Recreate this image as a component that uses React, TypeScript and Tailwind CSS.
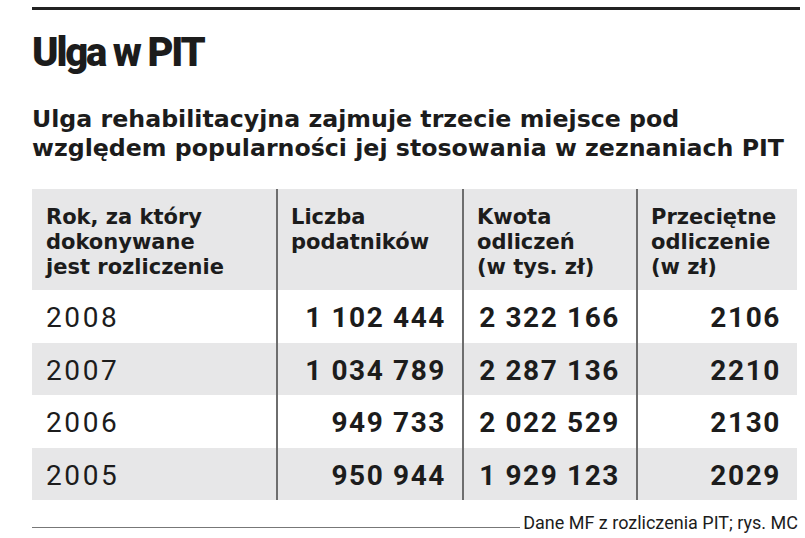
const rows = [
  { year: "2008", count: "1 102 444", sum: "2 322 166", avg: "2106", gray: false, h: "h-[53px]" },
  { year: "2007", count: "1 034 789", sum: "2 287 136", avg: "2210", gray: true, h: "h-[52px]" },
  { year: "2006", count: "949 733", sum: "2 022 529", avg: "2130", gray: false, h: "h-[53px]" },
  { year: "2005", count: "950 944", sum: "1 929 123", avg: "2029", gray: true, h: "h-[52px]" },
];

const headers = [
  ["Rok, za który", "dokonywane", "jest rozliczenie"],
  ["Liczba", "podatników"],
  ["Kwota", "odliczeń", "(w tys. zł)"],
  ["Przeciętne", "odliczenie", "(w zł)"],
];

const divider = "border-l-2 border-[#6e6e6e]";

export default function App() {
  return (
    <div className="w-[805px] h-[538px] bg-white pl-[32px] pt-[7px] text-[#1c1c1c] font-['Roboto',sans-serif] overflow-hidden">
      <div className="w-[768px] h-[3px] bg-[#222]" />

      <h1 className="mt-[23px] text-[40px] leading-[40px] font-black tracking-[-2.2px]">Ulga w PIT</h1>

      <p className="mt-[32px] whitespace-nowrap font-['DejaVu_Sans',sans-serif] text-[23.7px] leading-[29px] font-bold">
        Ulga rehabilitacyjna zajmuje trzecie miejsce pod
        <br />
        względem popularności jej stosowania w zeznaniach PIT
      </p>

      <div className="mt-[26px] w-[765px] grid grid-cols-[244px_186px_174px_161px]">
        {headers.map((lines, i) => (
          <div
            key={i}
            className={`h-[101px] bg-[#e7e7e8] pt-[16px] ${i === 0 ? "pl-[14px]" : `pl-[13px] ${divider}`} font-['DejaVu_Sans',sans-serif] text-[21px] leading-[25px] font-bold`}
          >
            {lines.map((l) => (
              <div key={l}>{l}</div>
            ))}
          </div>
        ))}

        {rows.map((r) => {
          const bg = r.gray ? "bg-[#e7e7e8]" : "bg-white";
          const num = `${r.h} ${bg} ${divider} flex items-center justify-end pr-[16px] pt-[3px] text-[28px] font-bold tracking-[1.6px]`;
          return [
            <div key={r.year + "y"} className={`${r.h} ${bg} flex items-center pl-[14px] pt-[3px] text-[28px] tracking-[2.6px]`}>
              {r.year}
            </div>,
            <div key={r.year + "c"} className={num}>{r.count}</div>,
            <div key={r.year + "s"} className={num}>{r.sum}</div>,
            <div key={r.year + "a"} className={num}>{r.avg}</div>,
          ];
        })}
      </div>

      <div className="mt-[14px] w-[766px] flex items-end gap-[3px]">
        <div className="flex-1 h-px bg-[#777] mb-[4px]" />
        <div className="text-[18px] leading-[18px]">Dane MF z rozliczenia PIT; rys. MC</div>
      </div>
    </div>
  );
}
